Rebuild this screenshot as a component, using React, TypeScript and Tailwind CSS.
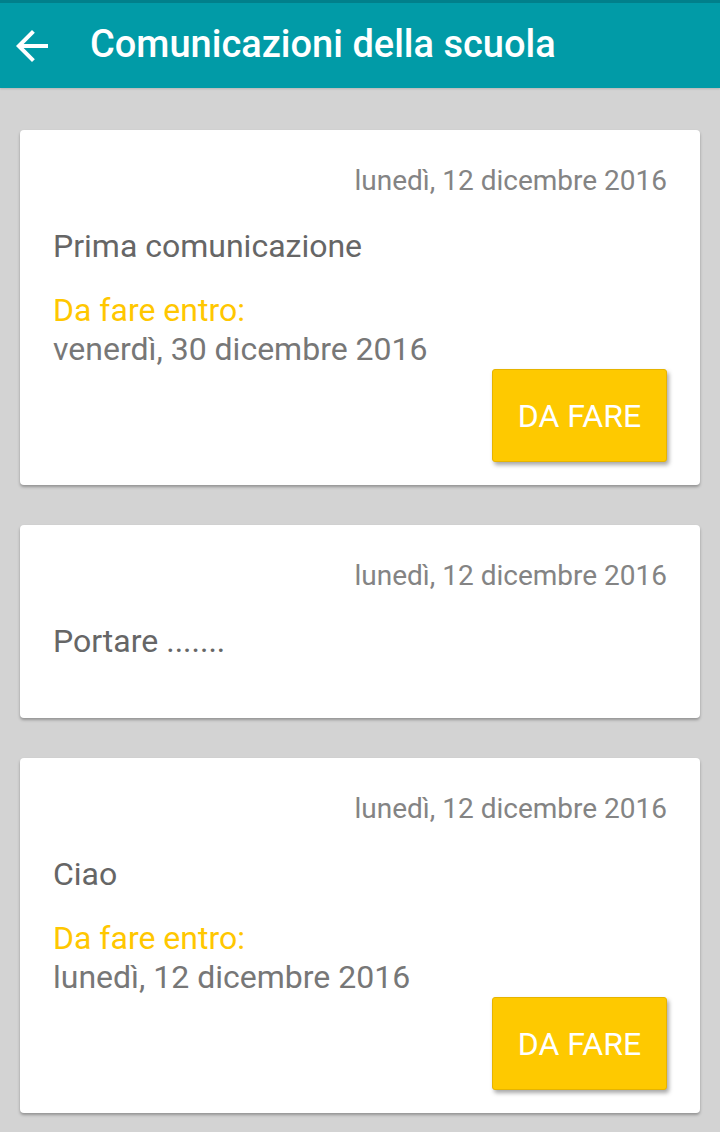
import React from 'react';

interface Notice {
  date: string;
  title: string;
  dueDate?: string;
}

const notices: Notice[] = [
  { date: 'lunedì, 12 dicembre 2016', title: 'Prima comunicazione', dueDate: 'venerdì, 30 dicembre 2016' },
  { date: 'lunedì, 12 dicembre 2016', title: 'Portare .......' },
  { date: 'lunedì, 12 dicembre 2016', title: 'Ciao', dueDate: 'lunedì, 12 dicembre 2016' },
];

const NoticeCard: React.FC<{ notice: Notice }> = ({ notice }) => (
  <div className="bg-white rounded-[4px] shadow-[0_2px_3px_rgba(0,0,0,0.3)] pl-[33px] pr-[33px] pt-[33px]">
    <p className="text-right text-[28px] leading-[36px] text-[#848484]">{notice.date}</p>
    <p className="mt-[27px] text-[32px] leading-[40px] text-[#666666]">{notice.title}</p>
    {notice.dueDate ? (
      <>
        <p className="mt-[24px] text-[32px] leading-[40px] text-[#ffc700]">Da fare entro:</p>
        <p className="text-[32px] leading-[39px] text-[#777777]">{notice.dueDate}</p>
        <div className="flex justify-end pb-[23px]">
          <button
            type="button"
            className="w-[175px] h-[93px] bg-[#fec900] border border-[#e6b400] rounded-[3px] shadow-[2px_3px_4px_rgba(0,0,0,0.35)] text-white text-[32px]"
          >
            DA FARE
          </button>
        </div>
      </>
    ) : (
      <div className="h-[57px]" />
    )}
  </div>
);

export default function App() {
  return (
    <div className="min-h-[1132px] bg-[#d3d3d3] font-['Roboto',sans-serif]">
      <header className="h-[88px] bg-[#019ba7] border-t-[3px] border-[#01808b] flex items-center shadow-[0_1px_2px_rgba(0,0,0,0.15)]">
        <div className="w-[48px] h-[48px] ml-[8px] flex items-center justify-center">
          <svg width="48" height="48" viewBox="0 0 24 24" fill="white">
            <path d="M20 11H7.83l5.59-5.59L12 4l-8 8 8 8 1.41-1.41L7.83 13H20v-2z" />
          </svg>
        </div>
        <h1 className="ml-[34px] text-white text-[38px] font-medium leading-none mt-[-3px]">
          Comunicazioni della scuola
        </h1>
      </header>
      <main className="px-[20px] pt-[42px] pb-[20px] flex flex-col gap-[40px]">
        {notices.map((n, i) => (
          <NoticeCard key={i} notice={n} />
        ))}
      </main>
    </div>
  );
}
